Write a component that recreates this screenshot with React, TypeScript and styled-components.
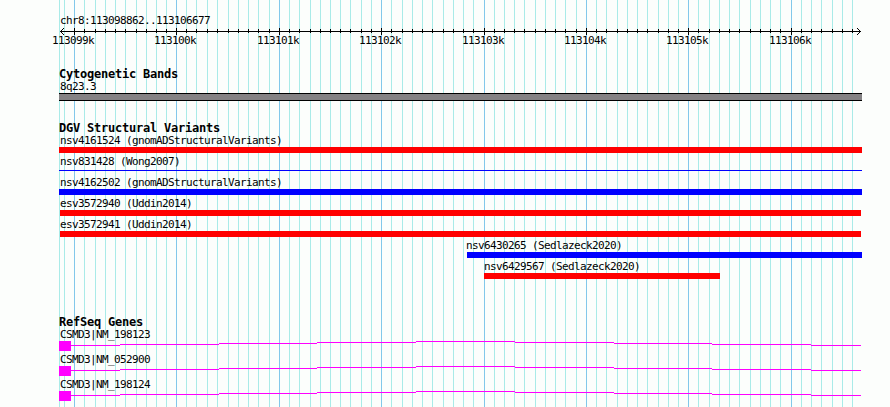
import React from 'react';
import styled, {createGlobalStyle} from 'styled-components';

const pageColor = '#fcfefc';
const minorGridColor = '#a9ebe8';
const majorGridColor = '#82c8ea';
const lossColor = '#ff0000';
const gainColor = '#0000ff';
const geneColor = '#ff00ff';

const majorLines = [74, 176, 279, 381, 484, 586, 688, 791];
const minorLines = [
  59, 64,
  84, 95, 105, 115, 125, 136, 146, 156, 166,
  186, 196, 207, 217, 228, 238, 248, 258, 269,
  289, 299, 310, 320, 330, 340, 350, 361, 371,
  391, 402, 412, 422, 432, 443, 453, 463, 473,
  494, 504, 514, 524, 535, 545, 555, 565, 576,
  596, 606, 617, 627, 637, 647, 658, 668, 678,
  698, 709, 719, 729, 739, 750, 760, 770, 780,
  801, 811, 821, 832, 842, 852
];

const tickLabels = ['113099k', '113100k', '113101k', '113102k', '113103k', '113104k', '113105k', '113106k'];

const variants = [
  {name: 'nsv4161524 (gnomADStructuralVariants)', labelStart: 60, start: 59, end: 862, color: lossColor},
  {name: 'nsv831428 (Wong2007)', labelStart: 60, start: 59, end: 862, color: gainColor, thin: true},
  {name: 'nsv4162502 (gnomADStructuralVariants)', labelStart: 60, start: 59, end: 862, color: gainColor},
  {name: 'esv3572940 (Uddin2014)', labelStart: 60, start: 60, end: 861, color: lossColor},
  {name: 'esv3572941 (Uddin2014)', labelStart: 60, start: 60, end: 861, color: lossColor},
  {name: 'nsv6430265 (Sedlazeck2020)', labelStart: 466, start: 467, end: 862, color: gainColor},
  {name: 'nsv6429567 (Sedlazeck2020)', labelStart: 484, start: 484, end: 720, color: lossColor}
];

const genes = ['CSMD3|NM_198123', 'CSMD3|NM_052900', 'CSMD3|NM_198124'];

const GlobalStyle = createGlobalStyle`
  body {
    margin: 0;
    background: ${pageColor};
    overflow: hidden;
  }
`

const Browser = styled.main`
  position: relative;
  width: 890px;
  height: 407px;
  overflow: hidden;
  display: flex;
  flex-direction: column;
  background: ${pageColor};
  color: #000;
  font-family: 'DejaVu Sans Mono', 'Liberation Mono', monospace;
`

const GridLines = styled.svg`
  position: absolute;
  inset: 0;
`

const Content = styled.div`
  position: relative;
  display: flex;
  flex-direction: column;
`

const Label = styled.div<{$start?: number}>`
  height: 12px;
  padding-left: ${({$start = 60}) => $start}px;
  font-size: 11px;
  line-height: 12px;
  letter-spacing: -0.623px;
  white-space: pre;
`

const TrackTitle = styled.h2`
  height: 13px;
  margin: 0;
  padding-left: 59px;
  font-size: 12px;
  font-weight: bold;
  line-height: 13px;
  letter-spacing: -0.225px;
  white-space: pre;
`

const Ruler = styled.section`
  height: 53px;
  padding-top: 15px;
`

const RulerAxis = styled.svg`
  display: block;
`

const TickLabels = styled.div`
  display: grid;
  grid-template-columns: 102px 103px 102px 103px 102px 102px 103px 102px;
  padding-left: 52px;
  font-size: 11px;
  line-height: 12px;
  letter-spacing: -0.623px;
`

const Track = styled.section<{$height: number}>`
  flex: none;
  height: ${({$height}) => $height}px;
`

const Band = styled.div`
  box-sizing: border-box;
  width: 803px;
  height: 8px;
  margin-left: 59px;
  border: solid #000;
  border-width: 1px 0;
  background: #848284;
`

const VariantRow = styled.div`
  height: 21px;
`

const VariantBar = styled.div<{$start: number; $end: number; $color: string; $thin?: boolean}>`
  width: ${({$start, $end}) => $end - $start}px;
  height: ${({$thin}) => $thin ? 1 : 6}px;
  margin-top: ${({$thin}) => $thin ? 2 : 0}px;
  margin-left: ${({$start}) => $start}px;
  background: ${({$color}) => $color};
`

const GeneRow = styled.div`
  height: 25px;
`

const GeneShape = styled.svg`
  display: block;
`

const Grid = () => <GridLines width="890" height="407" shapeRendering="crispEdges">
  {minorLines.map(x => <rect key={x} x={x} y="0" width="1" height="407" fill={minorGridColor}/>)}
  {majorLines.map(x => <rect key={x} x={x} y="0" width="1" height="407" fill={majorGridColor}/>)}
</GridLines>

const Axis = () => <RulerAxis width="890" height="8" shapeRendering="crispEdges">
  <rect x="60" y="4" width="801" height="1"/>
  {minorLines.slice(2).map(x => <rect key={x} x={x} y="2" width="1" height="4"/>)}
  {majorLines.map(x => <rect key={x} x={x} y="1" width="1" height="7"/>)}
  {[1, 2, 3].map(i => <React.Fragment key={i}>
    <rect x={60 + i} y={4 - i} width="1" height="1"/>
    <rect x={60 + i} y={4 + i} width="1" height="1"/>
    <rect x={860 - i} y={4 - i} width="1" height="1"/>
    <rect x={860 - i} y={4 + i} width="1" height="1"/>
  </React.Fragment>)}
</RulerAxis>

const Gene = ({name}: {name: string}) => <GeneRow>
  <Label>{name}</Label>
  <GeneShape width="890" height="12" shapeRendering="crispEdges" fill={geneColor}>
    <rect x="59" y="0" width="12" height="10"/>
    <rect x="71" y="4" width="49" height="1"/>
    <rect x="120" y="3" width="99" height="1"/>
    <rect x="219" y="2" width="98" height="1"/>
    <rect x="317" y="1" width="99" height="1"/>
    <rect x="416" y="0" width="99" height="1"/>
    <rect x="515" y="1" width="99" height="1"/>
    <rect x="614" y="2" width="98" height="1"/>
    <rect x="712" y="3" width="99" height="1"/>
    <rect x="811" y="4" width="50" height="1"/>
  </GeneShape>
</GeneRow>

export default function App() {
  return <Browser>
    <GlobalStyle/>
    <Grid/>
    <Content>
      <Ruler>
        <Label>chr8:113098862..113106677</Label>
        <Axis/>
        <TickLabels>
          {tickLabels.map(label => <span key={label}>{label}</span>)}
        </TickLabels>
      </Ruler>
      <Track $height={54}>
        <TrackTitle>Cytogenetic Bands</TrackTitle>
        <Label>8q23.3</Label>
        <Band/>
      </Track>
      <Track $height={194}>
        <TrackTitle>DGV Structural Variants</TrackTitle>
        {variants.map(({name, labelStart, start, end, color, thin}) => <VariantRow key={name}>
          <Label $start={labelStart}>{name}</Label>
          <VariantBar $start={start} $end={end} $color={color} $thin={thin}/>
        </VariantRow>)}
      </Track>
      <Track $height={91}>
        <TrackTitle>RefSeq Genes</TrackTitle>
        {genes.map(name => <Gene key={name} name={name}/>)}
      </Track>
    </Content>
  </Browser>
}
